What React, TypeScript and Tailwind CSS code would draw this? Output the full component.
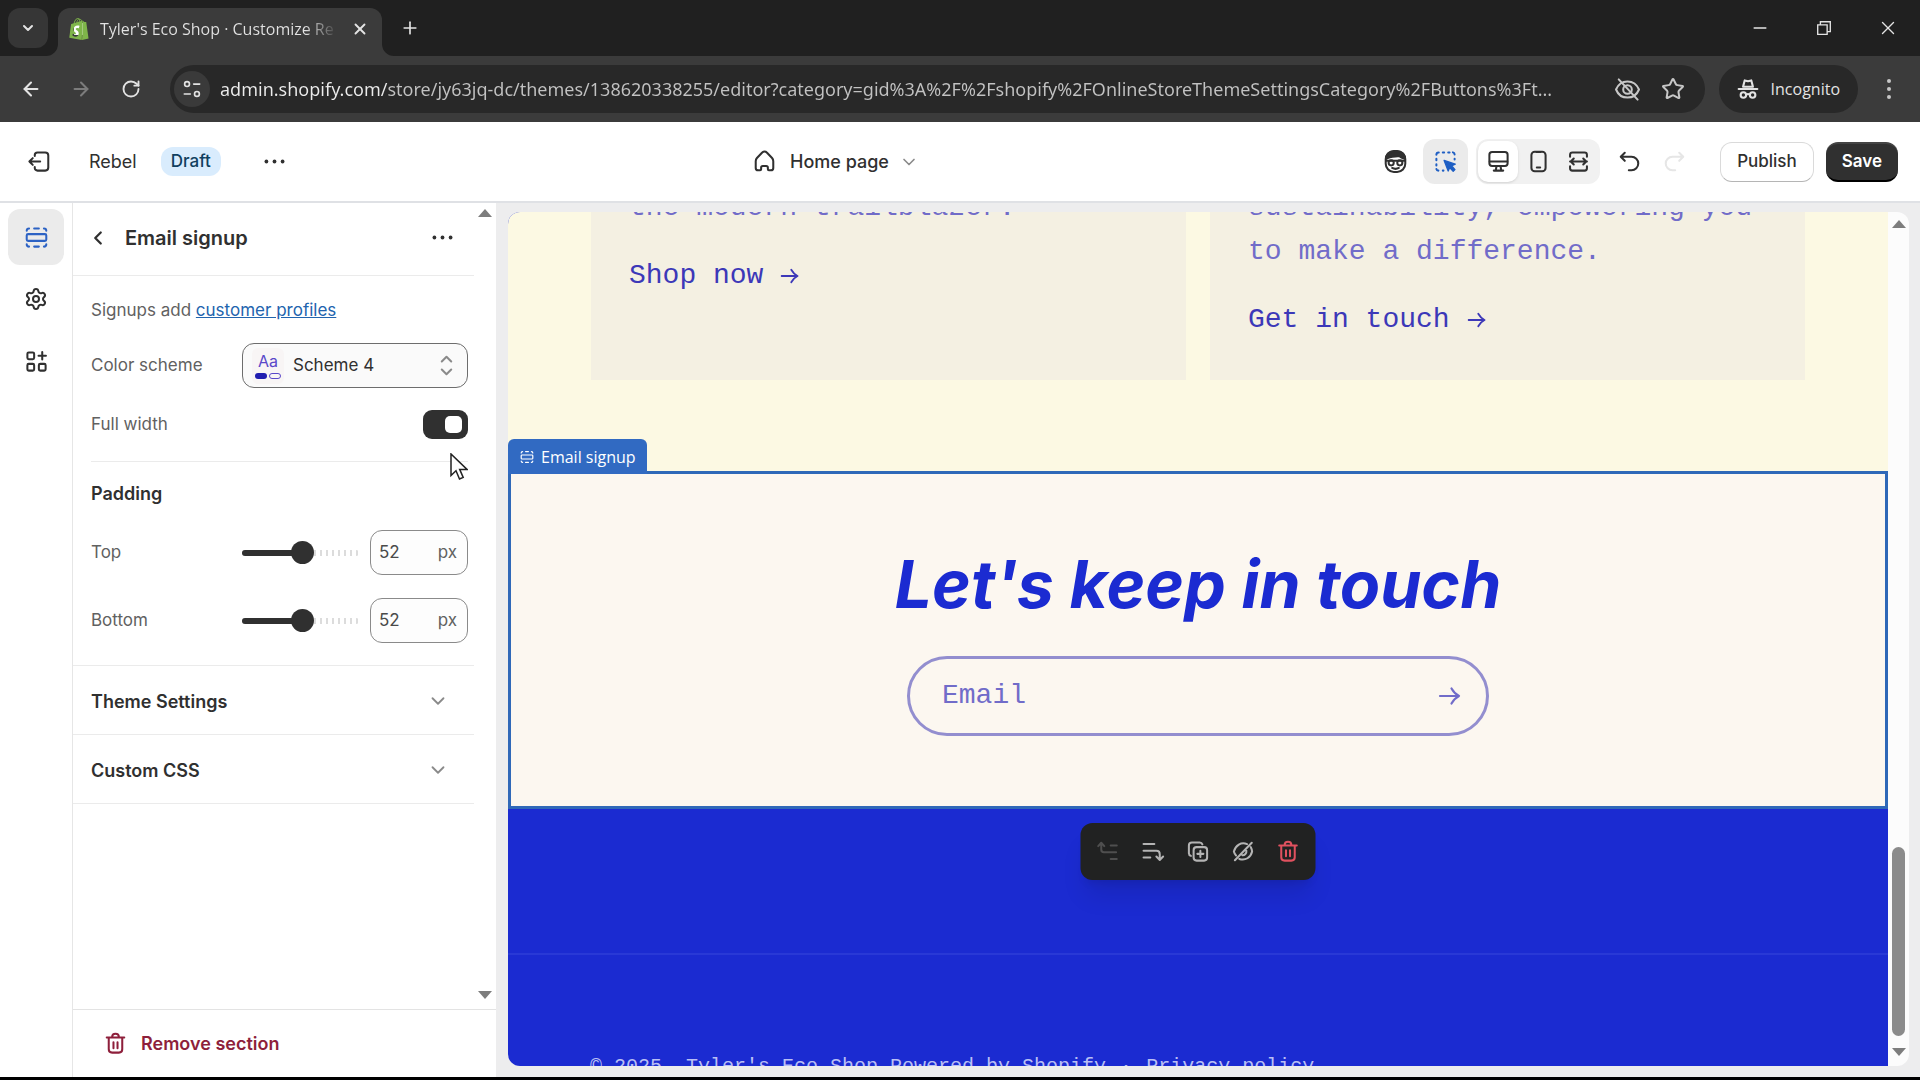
import { useState, type ReactNode } from 'react'
import { clsx } from 'clsx'
import { ArrowLeft, ArrowRight, ChevronDown, ChevronLeft, Minus, Plus, RotateCw, Settings, Star, X } from 'lucide-react'
import { SiShopify } from 'react-icons/si'

function Icon({ children, className = 'size-[27px]' }: { children: ReactNode; className?: string }) {
  return (
    <svg
      viewBox="0 0 20 20"
      fill="none"
      stroke="currentColor"
      strokeWidth="1.5"
      strokeLinecap="round"
      strokeLinejoin="round"
      aria-hidden="true"
      className={clsx('shrink-0', className)}
    >
      {children}
    </svg>
  )
}

const SectionIcon = ({ className }: { className?: string }) => (
  <Icon className={className}>
    <rect x="2.75" y="7.5" width="14.5" height="5" rx="1" />
    <path d="M2.75 5c0-1 .75-1.75 1.75-1.75M8.25 3.25h3.5M15.500 3.250c1 0 1.750.750 1.750 1.750M2.750 15c0 1 .750 1.750 1.750 1.750M8.250 16.750h3.500M15.500 16.750c1 0 1.750-.750 1.750-1.750" />
  </Icon>
)

const AppsIcon = () => (
  <Icon>
    <rect x="3.25" y="3.25" width="5" height="5" rx="1" />
    <rect x="3.25" y="11.75" width="5" height="5" rx="1" />
    <rect x="11.75" y="11.75" width="5" height="5" rx="1" />
    <path d="M14.25 3v5.5M11.5 5.75H17" />
  </Icon>
)

const ExitIcon = () => (
  <Icon>
    <path d="M6.500 6V5.250c0-1.100.9-2 2-2h5.750c1.250 0 2.250 1 2.250 2.250v9c0 1.250-1 2.250-2.250 2.250H8.500c-1.100 0-2-.9-2-2V14M10.500 10h-8M5 7.500 2.500 10 5 12.500" />
  </Icon>
)

const DotsIcon = () => (
  <Icon>
    <g fill="currentColor" stroke="none">
      <circle cx="4" cy="10" r="1.4" />
      <circle cx="10" cy="10" r="1.4" />
      <circle cx="16" cy="10" r="1.4" />
    </g>
  </Icon>
)

const HomeIcon = () => (
  <Icon>
    <path d="M3.500 9.800c0-.9.300-1.700.9-2.400L8.300 3.300c.9-1 2.500-1 3.400 0l3.900 4.100c.6.700.9 1.500.9 2.400v5c0 1-.8 1.750-1.750 1.750h-1.500c-.4 0-.750-.350-.750-.750V14.500c0-.7-.6-1.250-1.250-1.250h-2.500c-.7 0-1.250.550-1.250 1.250v1.300c0 .4-.350.750-.750.750h-1.500c-1 0-1.750-.8-1.750-1.750z" />
  </Icon>
)

const TrashIcon = ({ className }: { className?: string }) => (
  <Icon className={className}>
    <path d="M3.500 5.500h13M7.500 5.250c0-1.500 1-2.500 2.500-2.500s2.500 1 2.500 2.500M5 5.750v8.500c0 1.500 1 2.500 2.500 2.500h5c1.500 0 2.500-1 2.500-2.500v-8.500M8.500 9v4.500M11.500 9v4.500" />
  </Icon>
)

const InspectorFaceIcon = () => (
  <Icon>
    <rect x="2.750" y="2.250" width="14.500" height="15.500" rx="6" />
    <path d="M3 8V7C3.500 4.500 6 2.500 10 2.500s6.500 2 7 4.500v1c-2-.3-3-1.300-4.500-2C10 6.500 6 6.200 3 8z" fill="currentColor" />
    <path d="M3 9.500h14" />
    <circle cx="6.800" cy="11" r="1.900" />
    <circle cx="13.200" cy="11" r="1.900" />
    <path d="M7.500 14.800c1.500.8 3.500.8 5 0" />
  </Icon>
)

const SelectToolIcon = () => (
  <Icon>
    <path d="M3.250 5c0-1 .75-1.750 1.750-1.750M8 3.250h1M12 3.250h1M15.500 3.250c.8.200 1.250.8 1.250 1.500M3.250 8v1M3.250 12v1M3.250 15.500c.200.8.700 1.250 1.500 1.250M8 16.750h.5M16.750 8v.5" />
    <path d="M9 9.200 17.200 12l-2.700 1.200 2.500 2.800-1.300 1.200-2.600-2.700L12 17z" fill="currentColor" strokeWidth="1" />
  </Icon>
)

const DesktopIcon = () => (
  <Icon>
    <rect x="3.250" y="3" width="13.500" height="10.250" rx="2" />
    <path d="M3.500 10h13M8.500 13.500l-.5 3M11.500 13.500l.5 3M6.500 16.750h7" />
  </Icon>
)

const PhoneIcon = () => (
  <Icon>
    <rect x="4.750" y="2.750" width="10.500" height="14.500" rx="2.500" />
    <path d="M8.750 14.500h2.500M8.500 3h3" />
  </Icon>
)

const FullWidthIcon = () => (
  <Icon>
    <path d="M3.750 6.500V5c0-1 .75-1.750 1.750-1.750h9c1 0 1.750.75 1.750 1.750v1.500M3.750 13.500V15c0 1 .75 1.750 1.750 1.750h9c1 0 1.750-.75 1.750-1.750v-1.500M3.750 10h12.500M6.500 7.750 4.250 10l2.250 2.250M13.500 7.750 15.750 10l-2.250 2.250" />
  </Icon>
)

const UndoIcon = ({ className }: { className?: string }) => (
  <Icon className={className}>
    <path d="M6.500 3.500 3.500 6.500l3 3M3.750 6.500h7.750a5 5 0 0 1 0 10H9.500" />
  </Icon>
)

const MoveUpIcon = () => (
  <Icon>
    <path d="M5 4v4.500c0 1.200.8 2 2 2h9M2.750 6 5 3.500 7.250 6M12 5.500h4.500M12 15.500h4.500" />
  </Icon>
)

const MoveDownIcon = () => (
  <Icon>
    <path d="M3 4.500h8M3 9.500h9.500c1.700 0 2.500.8 2.500 2.500v4M12.500 13.750 15 16.250l2.500-2.500M3 14.500h5" />
  </Icon>
)

const DuplicateIcon = () => (
  <Icon>
    <rect x="6.750" y="6.750" width="10" height="10" rx="2.250" />
    <path d="M4.750 13.250c-.9-.3-1.500-1-1.500-2V5.500c0-1.250 1-2.250 2.250-2.250h5.750c1 0 1.700.6 2 1.500M11.750 9.500v4.500M9.500 11.750h4.500" />
  </Icon>
)

const HideIcon = () => (
  <Icon>
    <path d="M16.500 3.500 4 16.500M13 4.500C8.500 2.700 4.500 5.500 3.250 10c.3 1.200.8 2.200 1.600 3M15.700 6.700c.5.9.9 2 1.050 3.300-1 4.500-5 7-9.500 5.500M12.500 9.500A2.800 2.800 0 0 1 9.500 12.700" />
  </Icon>
)

const SortIcon = () => (
  <Icon>
    <path d="M6.500 7 10 3.500 13.500 7M6.500 13l3.500 3.500 3.500-3.500" />
  </Icon>
)

const SiteInfoIcon = () => (
  <Icon className="size-[22px]">
    <circle cx="5.500" cy="5.500" r="2.200" />
    <path d="M11.500 5.500H17M3 14.500h5.500" />
    <circle cx="14.500" cy="14.500" r="2.200" />
  </Icon>
)

const TrackingOffIcon = () => (
  <Icon className="size-[27px]">
    <path d="M1.500 10C3 6.300 6.200 4 10 4s7 2.300 8.500 6c-1.500 3.700-4.700 6-8.500 6s-7-2.300-8.500-6z" />
    <circle cx="10" cy="10" r="3.200" />
    <path d="m3.500 2.500 14 15" />
  </Icon>
)

const IncognitoIcon = () => (
  <Icon className="size-[22px]">
    <g strokeWidth="1.900">
      <path d="M5.500 8 7 2.200l3 .8 3-.8L14.500 8z" />
      <path d="M1.500 10h17" />
      <circle cx="5.800" cy="15.500" r="2.500" />
      <circle cx="14.200" cy="15.500" r="2.500" />
      <path d="M8.500 15c1-.6 2-.6 3 0" />
    </g>
  </Icon>
)

const LongArrow = ({ className }: { className?: string }) => (
  <svg viewBox="0 0 24 20" fill="none" stroke="currentColor" strokeWidth="2.200" strokeLinecap="round" strokeLinejoin="round" aria-hidden="true" className={className}>
    <path d="M2 10h19M13.500 2.500C15.500 6 18 8.500 21 10c-3 1.500-5.500 4-7.500 7.500" />
  </svg>
)

const Caret = ({ down = false }: { down?: boolean }) => (
  <svg viewBox="0 0 14 8" fill="#7d7d7d" aria-hidden="true" className="w-3.5 h-2 shrink-0">
    {down ? <path d="M0 0h14L7 8z" /> : <path d="M0 8h14L7 0z" />}
  </svg>
)

const Cursor = () => (
  <svg viewBox="0 0 18 28" fill="#fff" stroke="#222" strokeWidth="1.500" aria-hidden="true" className="absolute w-[18px] h-7 top-[43px] right-0 z-10">
    <path d="M1 1v21.500l5-4.700 3.500 8.200 3.700-1.600-3.500-8H17z" />
  </svg>
)

function BrowserChrome() {
  return (
    <div className="shrink-0 bg-[#202020] text-[#e3e3e3] font-['Open_Sans',sans-serif]">
      <div className="flex h-14 items-center pl-2">
        <button aria-label="Search tabs" className="grid place-items-center size-10 rounded-xl bg-[#363636]">
          <ChevronDown className="size-4" strokeWidth={3} />
        </button>
        <div className="relative flex self-end h-12 w-[324px] ml-2.5 items-center rounded-t-xl bg-[#3b3b3b] pl-2.5 pr-3 pb-1.5">
          <svg viewBox="0 0 12 12" aria-hidden="true" className="absolute size-3 right-full bottom-0 text-[#3b3b3b]">
            <path d="M12 0v12H0A12 12 0 0 0 12 0z" fill="currentColor" />
          </svg>
          <svg viewBox="0 0 12 12" aria-hidden="true" className="absolute size-3 left-full bottom-0 text-[#3b3b3b]">
            <path d="M0 0v12h12A12 12 0 0 1 0 0z" fill="currentColor" />
          </svg>
          <span className="relative grid place-items-center size-[22px]">
            <span className="absolute w-2.5 h-3 bg-white" />
            <SiShopify className="relative size-[22px] text-[#7fb54a]" />
          </span>
          <span className="ml-2.5 flex-1 overflow-hidden whitespace-nowrap text-base bg-[linear-gradient(90deg,#e3e3e3_205px,#3b3b3b_238px)] bg-clip-text text-transparent">
            Tyler's Eco Shop · Customize Re
          </span>
          <button aria-label="Close tab" className="ml-4 grid place-items-center size-5">
            <X className="size-[18px]" strokeWidth={2.5} />
          </button>
        </div>
        <button aria-label="New tab" className="ml-4 grid place-items-center size-6">
          <Plus className="size-5" />
        </button>
        <div className="ml-auto flex">
          <button aria-label="Minimize" className="grid place-items-center w-16 h-10">
            <Minus className="size-5" strokeWidth={1.75} />
          </button>
          <button aria-label="Restore" className="grid place-items-center w-16 h-10">
            <Icon className="size-[18px]">
              <path d="M3 6.500h10.500V17H3zM6 6.500V3h11v11h-3.500" strokeLinejoin="miter" />
            </Icon>
          </button>
          <button aria-label="Close window" className="grid place-items-center w-16 h-10">
            <X className="size-[22px]" strokeWidth={1.5} />
          </button>
        </div>
      </div>

      <div className="flex h-[66px] items-center bg-[#3b3b3b] pl-4">
        <button aria-label="Back" className="grid place-items-center w-[30px] h-8">
          <ArrowLeft className="size-[22px]" strokeWidth={2.25} />
        </button>
        <button aria-label="Forward" disabled className="ml-5 grid place-items-center w-[30px] h-8 text-[#7c7c7c]">
          <ArrowRight className="size-[22px]" strokeWidth={2.25} />
        </button>
        <button aria-label="Reload" className="ml-5 grid place-items-center w-[30px] h-8">
          <RotateCw className="size-5" strokeWidth={2.25} />
        </button>
        <div className="ml-6 flex flex-1 min-w-0 h-12 items-center rounded-full bg-[#282828] pl-1 pr-5">
          <button aria-label="View site information" className="grid place-items-center size-9 shrink-0 rounded-full bg-[#3a3a3a]">
            <SiteInfoIcon />
          </button>
          <input
            aria-label="Address and search bar"
            readOnly
            value="admin.shopify.com/store/jy63jq-dc/themes/138620338255/editor?category=gid%3A%2F%2Fshopify%2FOnlineStoreThemeSettingsCategory%2FButtons%3Ft..."
            className="ml-2.5 flex-1 min-w-0 font-['Noto_Sans',sans-serif] text-[18px] outline-none bg-[linear-gradient(90deg,#ececec_168px,#c2c2c2_168px)] bg-clip-text text-transparent"
          />
          <button aria-label="Third-party cookies blocked" className="ml-2 text-[#c7c7c7]">
            <TrackingOffIcon />
          </button>
          <button aria-label="Bookmark this tab" className="ml-5 text-[#c7c7c7]">
            <Star className="size-6" />
          </button>
        </div>
        <div className="ml-3.5 flex h-12 items-center gap-3 rounded-full bg-[#282828] px-[18px] text-base">
          <IncognitoIcon />
          Incognito
        </div>
        <button aria-label="Browser menu" className="mx-[19px] grid place-items-center w-6 h-8">
          <span className="flex flex-col gap-1">
            <span className="size-1 rounded-full bg-[#c7c7c7]" />
            <span className="size-1 rounded-full bg-[#c7c7c7]" />
            <span className="size-1 rounded-full bg-[#c7c7c7]" />
          </span>
        </button>
      </div>
    </div>
  )
}

const devices = [
  { label: 'Desktop', icon: DesktopIcon },
  { label: 'Mobile', icon: PhoneIcon },
  { label: 'Fullscreen', icon: FullWidthIcon },
]

function EditorHeader() {
  const [device, setDevice] = useState('Desktop')

  return (
    <header className="flex shrink-0 h-[81px] items-center justify-between border-b-2 border-[#dfe1e5] bg-white pl-[26px] pr-[22px] text-[17px] font-medium">
      <div className="flex items-center">
        <button aria-label="Exit editor">
          <ExitIcon />
        </button>
        <span className="ml-9 text-[18px] font-normal">Rebel</span>
        <span className="ml-6 rounded-xl bg-[#d9ecfd] px-2.5 py-0.5 text-[#10405f]">Draft</span>
        <button aria-label="More theme actions" className="ml-10">
          <DotsIcon />
        </button>
      </div>

      <button className="flex items-center text-[18px]">
        <HomeIcon />
        <span className="ml-3">Home page</span>
        <ChevronDown className="ml-2.5 size-5 text-[#8a8a8a]" />
      </button>

      <div className="flex items-center">
        <button aria-label="Sidekick">
          <InspectorFaceIcon />
        </button>
        <button aria-label="Toggle inspector" className="ml-3.5 grid place-items-center size-[45px] rounded-xl bg-[#ebebeb] text-[#1f5fc4]">
          <SelectToolIcon />
        </button>
        <div className="ml-2 flex h-[45px] items-center rounded-xl bg-[#f1f1f1] p-0.5">
          {devices.map(({ label, icon: DeviceIcon }) => (
            <button
              key={label}
              aria-label={label}
              onClick={() => setDevice(label)}
              className={clsx('grid place-items-center w-10 h-full rounded-[10px]', device === label && 'bg-white shadow-sm')}
            >
              <DeviceIcon />
            </button>
          ))}
        </div>
        <button aria-label="Undo" className="ml-4">
          <UndoIcon />
        </button>
        <button aria-label="Redo" disabled className="ml-[18px] text-[#e6e6e6]">
          <UndoIcon className="size-[27px] -scale-x-100" />
        </button>
        <button className="ml-8 h-10 rounded-xl border border-[#dadada] border-b-[#b5b5b5] bg-white px-4">Publish</button>
        <button className="ml-3 h-10 rounded-xl border-y-2 border-t-[#444] border-b-black bg-[#303030] px-4 font-semibold text-white">Save</button>
      </div>
    </header>
  )
}

const railItems = [
  { label: 'Sections', icon: <SectionIcon /> },
  { label: 'Theme settings', icon: <Settings className="size-6" /> },
  { label: 'App embeds', icon: <AppsIcon /> },
]

function PaddingField({ label }: { label: string }) {
  const [value, setValue] = useState(52)
  const id = `padding-${label.toLowerCase()}`

  return (
    <div className="flex h-[45px] items-center">
      <label htmlFor={id} className="flex-1">{label}</label>
      <div className="relative flex w-[117px] h-6 items-center">
        <div className="absolute inset-x-0 h-1.5 rounded-full bg-[repeating-linear-gradient(90deg,#dcdcdc_0px,#dcdcdc_2px,transparent_2px,transparent_6px)]" />
        <div className="absolute left-0 h-1.5 rounded-full bg-[#303030]" style={{ width: `${value}%` }} />
        <input
          id={id}
          type="range"
          min={0}
          max={100}
          value={value}
          onChange={(e) => setValue(Number(e.target.value))}
          className="relative w-full appearance-none bg-transparent [&::-webkit-slider-thumb]:appearance-none [&::-webkit-slider-thumb]:size-[23px] [&::-webkit-slider-thumb]:rounded-full [&::-webkit-slider-thumb]:bg-[#303030]"
        />
      </div>
      <div className="ml-[11px] flex w-[98px] h-full items-center rounded-xl border border-[#8a8a8a] bg-[#fdfdfd] px-2">
        <input
          aria-label={`${label} in pixels`}
          value={value}
          onChange={(e) => setValue(Number(e.target.value) || 0)}
          className="w-0 flex-1 outline-none text-[#4a4a4a]"
        />
        <span className="pr-0.5">px</span>
      </div>
    </div>
  )
}

function Sidebar() {
  const [fullWidth, setFullWidth] = useState(true)

  return (
    <aside className="flex shrink-0 bg-white text-[17px] text-[#616161]">
      <nav className="flex w-[72px] flex-col items-center gap-1.5 pt-1.5 text-[#303030]">
        {railItems.map(({ label, icon }, i) => (
          <button
            key={label}
            aria-label={label}
            className={clsx('grid place-items-center size-14 rounded-xl', i === 0 && 'bg-[#ebebeb] text-[#2c62c4]')}
          >
            {icon}
          </button>
        ))}
      </nav>

      <div className="flex w-[424px] flex-col border-l border-[#e6e6e6]">
        <div className="flex flex-1 min-h-0">
          <div className="flex-1 min-w-0">
            <div className="flex h-[73px] items-center border-b border-[#ebebeb] pl-3.5 pr-[18px] pb-[3px] text-[#303030]">
              <button aria-label="Back to sections">
                <ChevronLeft className="size-[22px]" strokeWidth={2.5} />
              </button>
              <h2 className="ml-4 flex-1 text-[20px] leading-7 font-semibold">Email signup</h2>
              <button aria-label="Section actions">
                <DotsIcon />
              </button>
            </div>

            <div className="border-b border-[#ebebeb] pl-[18px] pr-1.5 pt-5 pb-[22px]">
              <p className="leading-7">
                Signups add <a href="#customers" className="text-[#2264ae] underline">customer profiles</a>
              </p>
              <div className="mt-[19px] flex h-[45px] items-center">
                <label htmlFor="scheme" className="flex-1">Color scheme</label>
                <div className="relative flex w-[226px] h-full items-center">
                  <select id="scheme" className="w-full h-full appearance-none rounded-xl border border-[#6d6d6d] bg-[#fafafa] pl-[50px] text-[#303030]">
                    <option>Scheme 4</option>
                  </select>
                  <span className="pointer-events-none absolute left-2.5 flex w-8 h-9 flex-col items-center justify-center gap-1 rounded-md bg-[#f8f5f5]">
                    <span className="text-base leading-4 text-[#5a48c9]">Aa</span>
                    <span className="flex gap-0.5">
                      <span className="w-3 h-1.5 rounded-sm bg-[#211fb0]" />
                      <span className="w-3 h-1.5 rounded-sm border border-[#5a48c9]" />
                    </span>
                  </span>
                  <span className="pointer-events-none absolute right-2 text-[#8a8a8a]">
                    <SortIcon />
                  </span>
                </div>
              </div>
              <div className="relative mt-[22px] flex h-[29px] items-center">
                <label htmlFor="full-width" className="flex-1">Full width</label>
                <input
                  id="full-width"
                  type="checkbox"
                  role="switch"
                  checked={fullWidth}
                  onChange={(e) => setFullWidth(e.target.checked)}
                  className="flex w-[45px] h-[29px] appearance-none items-center rounded-[9px] bg-[#8a8a8a] px-1.5 before:size-[17px] before:rounded-[5px] before:bg-white checked:justify-end checked:bg-[#303030]"
                />
                <Cursor />
              </div>

              <h3 className="mt-[22px] border-t border-[#ebebeb] pt-5 pb-6 text-[18px] leading-6 font-semibold text-[#303030]">Padding</h3>
              <div className="flex flex-col gap-[23px]">
                <PaddingField label="Top" />
                <PaddingField label="Bottom" />
              </div>
            </div>

            {['Theme Settings', 'Custom CSS'].map((title) => (
              <button key={title} className="flex w-full h-[69px] items-center justify-between border-b border-[#ebebeb] pl-[18px] pr-[25px] pt-0.5 text-[18px] font-semibold text-[#303030]">
                {title}
                <ChevronDown className="size-[22px] text-[#8a8a8a]" />
              </button>
            ))}
          </div>
          <div className="flex w-[22px] flex-col items-center justify-between pt-1.5 pb-2.5">
            <Caret />
            <Caret down />
          </div>
        </div>

        <div className="flex h-[68px] items-center border-t border-[#e3e3e3] pl-[29px]">
          <button className="flex items-center gap-3 text-[18px] font-semibold text-[#8e1f3b]">
            <TrashIcon />
            Remove section
          </button>
        </div>
      </div>
    </aside>
  )
}

const promoCards = [
  { text: 'the modern trailblazer.', link: 'Shop now' },
  { text: 'sustainability, empowering you to make a difference.', link: 'Get in touch' },
]

const sectionTools = [
  { label: 'Move up', icon: <MoveUpIcon />, color: 'text-[#4f4f4f]' },
  { label: 'Move down', icon: <MoveDownIcon />, color: 'text-[#b4b4b4]' },
  { label: 'Duplicate', icon: <DuplicateIcon />, color: 'text-[#b4b4b4]' },
  { label: 'Hide', icon: <HideIcon />, color: 'text-[#b4b4b4]' },
  { label: 'Remove', icon: <TrashIcon />, color: 'text-[#e0515f]' },
]

function Preview() {
  return (
    <main className="flex flex-1 min-w-0 bg-[#ededee] pl-3 pr-[11px] pt-[9px] pb-[11px]">
      <div className="flex flex-1 min-w-0 overflow-hidden rounded-xl bg-[#fcfcfc]">
        <div className="flex flex-1 min-w-0 flex-col overflow-hidden bg-[#1b2bd1] font-['Liberation_Mono',monospace] text-[28px]">
          <div className="shrink-0 bg-[#fcf9e3] px-[83px] pb-[91px]">
            <div className="-mt-[26px] grid grid-cols-2 gap-6 leading-[44px]">
              {promoCards.map(({ text, link }) => (
                <div key={link} className="bg-[#f4f0e2] px-[38px] pb-[38px]">
                  <p className="text-[#716cc9]">{text}</p>
                  <a href="#shop" className="mt-6 inline-flex items-center gap-[17px] text-[#3c38b8]">
                    {link}
                    <LongArrow className="w-5 h-[18px]" />
                  </a>
                </div>
              ))}
            </div>
          </div>

          <section className="relative shrink-0 border-3 border-[#2f68b8] bg-[#fcf7f0] py-[70px]">
            <div className="absolute -left-[3px] bottom-full flex h-[35px] items-center gap-1.5 rounded-t-md bg-[#316ac2] px-[11px] font-['Open_Sans',sans-serif] text-base font-medium text-white">
              <SectionIcon className="size-4" />
              Email signup
            </div>
            <h1 className="text-center font-['Inter',sans-serif] text-[66px] leading-[80px] font-bold italic text-[#1b2bd1]">Let's keep in touch</h1>
            <form className="mx-auto mt-8 flex w-[582px] h-20 items-center rounded-full border-3 border-[#938ecf] pl-8 pr-6 text-[#716cc9]" onSubmit={(e) => e.preventDefault()}>
              <input type="email" aria-label="Email" placeholder="Email" className="min-w-0 flex-1 outline-none placeholder:text-[#716cc9]" />
              <button aria-label="Subscribe">
                <LongArrow className="w-6 h-5" />
              </button>
            </form>

            <div className="absolute left-1/2 top-full mt-[17px] flex h-[57px] -translate-x-1/2 items-center gap-[18px] rounded-xl bg-[#212222] px-[14px] shadow-xl">
              {sectionTools.map(({ label, icon, color }) => (
                <button key={label} aria-label={label} className={color}>
                  {icon}
                </button>
              ))}
            </div>
          </section>

          <div className="shrink-0 h-[146px] border-b-2 border-[#2939d6]" />
          <footer className="shrink-0 whitespace-pre px-[82px] pt-[98px] text-xl text-[#b9bff5]">
            © 2025, Tyler's Eco Shop Powered by Shopify <span className="px-0.5">·</span> <a href="#privacy">Privacy policy</a>
          </footer>
        </div>
        <div className="flex w-[21px] shrink-0 flex-col items-center justify-between pt-2 pb-2.5">
          <Caret />
          <div className="flex flex-col items-center gap-3">
            <div className="w-[13px] h-[189px] rounded-full bg-[#8b8b8b]" />
            <Caret down />
          </div>
        </div>
      </div>
    </main>
  )
}

export default function App() {
  return (
    <div className="flex h-screen flex-col overflow-hidden border-b-3 border-black bg-white font-['Inter',sans-serif] text-[#303030]">
      <BrowserChrome />
      <EditorHeader />
      <div className="flex flex-1 min-h-0">
        <Sidebar />
        <Preview />
      </div>
    </div>
  )
}
